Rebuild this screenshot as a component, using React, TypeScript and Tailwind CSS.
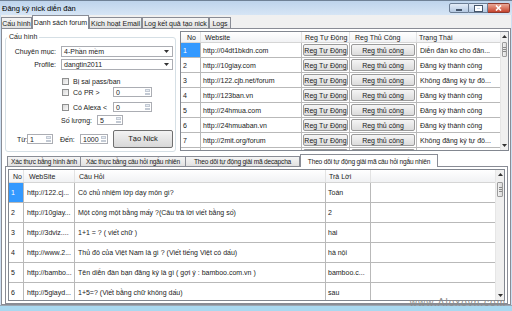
import React from 'react';

const forums = [
    ['1', 'http://04dt1bkdn.com', 'Diễn đàn ko cho đăn...'],
    ['2', 'http://10giay.com', 'Đăng ký thành công'],
    ['3', 'http://122.cjb.net/forum', 'Không đăng ký tự đô...'],
    ['4', 'http://123ban.vn', 'Đăng ký thành công'],
    ['5', 'http://24hmua.com', 'Đăng ký thành công'],
    ['6', 'http://24hmuaban.vn', 'Đăng ký thành công'],
    ['7', 'http://2mit.org/forum', 'Không đăng ký tự đô...'],
    ['8', 'http://2nd.vn', 'Đăng ký thành công'],
];

const questions = [
    ['1', 'http://122.cj...', 'Cô chủ nhiệm lớp dạy môn gì?', 'Toán'],
    ['2', 'http://10giay...', 'Một cộng một bằng mấy ?(Câu trả lời viết bằng số)', '2'],
    ['3', 'http://3dviz....', '1+1 = ? ( viết chữ )', 'hai'],
    ['4', 'http://www.2...', 'Thủ đô của Việt Nam là gì ? (Viết tiếng Việt có dấu)', 'hà nội'],
    ['5', 'http://bambo...', 'Tên diễn đàn bạn đăng ký là gì ( gợi ý : bamboo.com.vn )', 'bamboo.c...'],
    ['6', 'http://5giayd...', '1+5=? (Viết bằng chữ không dấu)', 'sau'],
];

function Arrow({ up }: { up?: boolean }) {
    return (
        <svg width="5" height="3" viewBox="0 0 5 3">
            <path d={up ? 'M0 3h5L2.5 0z' : 'M0 0h5L2.5 3z'} fill="#333" />
        </svg>
    );
}

function Spin({ value, className }: { value: string; className: string }) {
    return (
        <div className={`flex h-[10px] border border-[#abadb3] bg-white ${className}`}>
            <span className="flex-1 pl-[2px] flex items-center">{value}</span>
            <div className="w-[7px] flex flex-col gap-px p-px">
                <div className="flex-1 bg-[#e6ebf2] border border-[#c3cad4]" />
                <div className="flex-1 bg-[#e6ebf2] border border-[#c3cad4]" />
            </div>
        </div>
    );
}

function Combo({ value }: { value: string }) {
    return (
        <div className="w-[112px] h-[11px] border border-[#abadb3] bg-white flex items-center justify-between pl-[2px] pr-[3px]">
            <span>{value}</span>
            <Arrow />
        </div>
    );
}

function Check() {
    return <div className="w-[7px] h-[7px] border border-[#8e8f8f] bg-gradient-to-br from-[#d8d8d8] to-[#fafafa]" />;
}

function Tab({ label, className, active }: { label: string; className: string; active?: boolean }) {
    return active ? (
        <div className={`shrink-0 whitespace-nowrap -mb-px relative z-10 bg-white border border-b-0 border-[#898c95] flex items-center justify-center ${className}`}>
            <span className="leading-[9px]">{label}</span>
        </div>
    ) : (
        <div className={`shrink-0 whitespace-nowrap border border-b-0 border-[#898c95] bg-gradient-to-b from-[#f5f5f5] to-[#e1e1e1] flex items-center justify-center ${className}`}>
            <span className="leading-[9px]">{label}</span>
        </div>
    );
}

function ScrollBar({ w, thumbTop }: { w: string; thumbTop: string }) {
    return (
        <div className={`${w} bg-[#f0f0f0] flex flex-col border-l border-[#e6e6e6]`}>
            <div className="h-[9px] flex items-center justify-center"><Arrow up /></div>
            <div className={`${thumbTop} h-[15px] mx-px rounded-[1px] border border-[#9c9c9c] bg-gradient-to-r from-[#f3f3f3] to-[#dadada] flex flex-col items-center justify-center gap-px`}>
                <div className="w-[3px] h-px bg-[#8a8a8a]" />
                <div className="w-[3px] h-px bg-[#8a8a8a]" />
                <div className="w-[3px] h-px bg-[#8a8a8a]" />
            </div>
            <div className="flex-1" />
            <div className="h-[9px] flex items-center justify-center"><Arrow /></div>
        </div>
    );
}

function GridButton({ label }: { label: string }) {
    return (
        <div className="h-full w-full rounded-[2px] border border-[#9a9a9a] bg-gradient-to-b from-[#f5f5f5] to-[#dcdcdc] flex items-center justify-center whitespace-nowrap">
            {label}
        </div>
    );
}

export default function App() {
    return (
        <div className="w-[512px] h-[311px] overflow-hidden flex flex-col bg-[#cddff2] font-['Liberation_Sans',Arial,sans-serif] text-[7px] leading-none text-[#1a1a1a] relative">
            {/* Title bar */}
            <div className="h-[15px] flex items-start justify-between border-t border-[#6f8196] bg-gradient-to-b from-[#bed4ec] to-[#d6e5f5]">
                <span className="text-[7.5px] text-black pl-[2px] mt-[4px]">Đăng ký nick diễn đàn</span>
                <div className="flex mt-[2px] mr-[2px]">
                    <div className="w-[20px] h-[10px] rounded-l-[2px] border border-[#6c7e95] bg-gradient-to-b from-[#e4edf8] to-[#b4c9e2] flex items-center justify-center">
                        <div className="w-[6px] h-[2px] bg-white border border-[#44556b] mt-[3px]" />
                    </div>
                    <div className="w-[19px] h-[10px] border border-l-0 border-[#6c7e95] bg-gradient-to-b from-[#e4edf8] to-[#b4c9e2] flex items-center justify-center">
                        <div className="w-[7px] h-[5px] border-2 border-white outline outline-[#44556b]" />
                    </div>
                    <div className="w-[22px] h-[10px] rounded-r-[2px] border border-l-0 border-[#8b3a30] bg-gradient-to-b from-[#e9a898] to-[#c5412c] flex items-center justify-center">
                        <svg width="7" height="6" viewBox="0 0 7 6">
                            <path d="M1 0.5L6 5.5M6 0.5L1 5.5" stroke="#fff" strokeWidth="1.6" />
                        </svg>
                    </div>
                </div>
            </div>

            {/* Client area */}
            <div className="flex-1 mx-px bg-[#f0f0f0] flex flex-col">
                <div className="h-[13px] flex items-end">
                    <Tab label="Cấu hình" className="w-[31px] h-[11px]" />
                    <Tab label="Danh sách forum" className="w-[57px] h-[14px]" active />
                    <Tab label="Kích hoạt Email" className="w-[53px] h-[11px]" />
                    <Tab label="Log kết quả tạo nick" className="w-[67px] h-[11px]" />
                    <Tab label="Logs" className="w-[22px] h-[11px]" />
                </div>

                <div className="h-[277px] bg-white border border-[#898c95] flex flex-col">
                    {/* Top section */}
                    <div className="h-[123px] flex items-start">
                        <fieldset className="ml-[3px] mt-[4px] w-[171px] h-[119px] border border-[#d5dfe5] rounded-[3px] min-w-0 p-0 m-0">
                            <legend className="ml-px px-[2px] leading-[8px]">Cấu hình</legend>
                            <div className="flex flex-col">
                                <div className="mt-[5px] h-[11px] flex items-center">
                                    <span className="w-[50px] text-right">Chuyên mục:</span>
                                    <div className="ml-[5px]"><Combo value="4-Phần mềm" /></div>
                                </div>
                                <div className="mt-[2px] h-[11px] flex items-center">
                                    <span className="w-[50px] text-right">Profile:</span>
                                    <div className="ml-[5px]"><Combo value="dangtin2011" /></div>
                                </div>
                                <div className="mt-[7px] h-[8px] flex items-center ml-[56px]">
                                    <Check />
                                    <span className="ml-[4px]">Bị sai pass/ban</span>
                                </div>
                                <div className="mt-[2px] h-[10px] flex items-center ml-[56px]">
                                    <div className="w-[51px] flex items-center">
                                        <Check />
                                        <span className="ml-[4px]">Có PR &gt;</span>
                                    </div>
                                    <Spin value="0" className="w-[39px]" />
                                </div>
                                <div className="mt-[5px] h-[10px] flex items-center ml-[56px]">
                                    <div className="w-[51px] flex items-center">
                                        <Check />
                                        <span className="ml-[4px]">Có Alexa &lt;</span>
                                    </div>
                                    <Spin value="0" className="w-[39px]" />
                                </div>
                                <div className="mt-[3px] h-[10px] flex items-center ml-[55px]">
                                    <span className="w-[36px]">Số lượng:</span>
                                    <Spin value="5" className="w-[26px]" />
                                </div>
                                <div className="mt-[5px] h-[18px] flex items-center ml-[11px]">
                                    <span className="w-[10px]">Từ:</span>
                                    <Spin value="1" className="w-[26px]" />
                                    <span className="ml-[7px] w-[20px]">Đến:</span>
                                    <Spin value="1000" className="w-[28px]" />
                                    <div className="ml-[5px] w-[60px] h-[18px] rounded-[2px] border border-[#707070] bg-gradient-to-b from-[#f3f3f3] to-[#d8d8d8] flex items-center justify-center text-[7.5px]">
                                        Tạo Nick
                                    </div>
                                </div>
                            </div>
                        </fieldset>

                        {/* Forum grid */}
                        <div className="ml-[4px] mt-[2px] w-[329px] h-[120px] border border-[#828790] bg-white flex overflow-hidden">
                            <div className="flex-1 flex flex-col">
                                <div className="h-[11px] shrink-0 flex border-b border-[#d5d5d5] bg-gradient-to-b from-white to-[#f1f2f4]">
                                    <span className="w-[20px] pl-[6px] flex items-center border-r border-[#e3e3e3]">No</span>
                                    <span className="w-[101px] pl-[4px] flex items-center border-r border-[#e3e3e3]">Website</span>
                                    <span className="w-[48px] pl-[3px] flex items-center border-r border-[#e3e3e3] whitespace-nowrap">Reg Tự Động</span>
                                    <span className="w-[67px] pl-[5px] flex items-center border-r border-[#e3e3e3]">Reg Thủ Công</span>
                                    <span className="flex-1 pl-[2px] flex items-center">Trạng Thái</span>
                                </div>
                                {forums.map((f, i) => (
                                    <div key={f[0]} className="h-[15px] shrink-0 flex border-b border-[#b9b9b9]">
                                        <span className={`w-[20px] pl-[2px] flex items-center border-r border-[#b9b9b9] ${i === 0 ? 'bg-[#3399ff] text-white' : ''}`}>{f[0]}</span>
                                        <span className="w-[101px] pl-[2px] flex items-center border-r border-[#b9b9b9]">{f[1]}</span>
                                        <span className="w-[48px] p-px border-r border-[#b9b9b9]"><GridButton label="Reg Tự Động" /></span>
                                        <span className="w-[67px] p-px border-r border-[#b9b9b9]"><GridButton label="Reg thủ công" /></span>
                                        <span className="flex-1 pl-[3px] flex items-center whitespace-nowrap overflow-hidden">{f[2]}</span>
                                    </div>
                                ))}
                            </div>
                            <ScrollBar w="w-[8px]" thumbTop="mt-[1px]" />
                        </div>
                    </div>

                    {/* Bottom tab control */}
                    <div className="mt-[2px] h-[12px] flex items-end pl-[5px] text-[6.6px] tracking-[-0.2px]">
                        <Tab label="Xác thực bằng hình ảnh" className="w-[74px] h-[10px]" />
                        <Tab label="Xác thực bằng câu hỏi ngẫu nhiên" className="w-[105px] h-[10px] border-l-0" />
                        <Tab label="Theo dõi tự động giải mã decapcha" className="w-[114px] h-[10px] border-l-0" />
                        <Tab label="Theo dõi tự động giải mã câu hỏi ngẫu nhiên" className="w-[138px] h-[13px]" active />
                    </div>
                    <div className="ml-[3px] w-[503px] h-[138px] border border-[#898c95] bg-white p-[2px]">
                        <div className="h-full border border-[#828790] bg-white flex overflow-hidden">
                            <div className="flex-1 flex flex-col">
                                <div className="h-[13px] shrink-0 flex border-b border-[#d5d5d5] bg-gradient-to-b from-white to-[#f1f2f4]">
                                    <span className="w-[15px] pl-[4px] flex items-center border-r border-[#e3e3e3]">No</span>
                                    <span className="w-[51px] pl-[5px] flex items-center border-r border-[#e3e3e3]">WebSite</span>
                                    <span className="w-[251px] pl-[4px] flex items-center border-r border-[#e3e3e3]">Câu Hỏi</span>
                                    <span className="w-[45px] pl-[3px] flex items-center border-r border-[#e3e3e3]">Trả Lời</span>
                                    <span className="flex-1" />
                                </div>
                                {questions.map((q, i) => (
                                    <div key={q[0]} className="h-[20px] shrink-0 flex border-b border-[#b9b9b9]">
                                        <span className={`w-[15px] pl-[2px] flex items-center border-r border-[#b9b9b9] ${i === 0 ? 'bg-[#3399ff] text-white' : ''}`}>{q[0]}</span>
                                        <span className="w-[51px] pl-[3px] flex items-center border-r border-[#b9b9b9] whitespace-nowrap overflow-hidden">{q[1]}</span>
                                        <span className="w-[251px] pl-[3px] flex items-center border-r border-[#b9b9b9] whitespace-nowrap overflow-hidden">{q[2]}</span>
                                        <span className="w-[45px] pl-[2px] flex items-center border-r border-[#b9b9b9] whitespace-nowrap overflow-hidden">{q[3]}</span>
                                        <span className="flex-1" />
                                    </div>
                                ))}
                            </div>
                            <ScrollBar w="w-[9px]" thumbTop="mt-[3px]" />
                        </div>
                    </div>
                </div>
            </div>

            <div className="h-[6px] border-t border-[#9aa6b2] bg-[#a9d8f0]" />

            {/* watermark */}
            <span className="absolute right-[6px] bottom-[3px] text-[10px] tracking-[1px] text-[#8c8c8c]">www.Aloxovn.com</span>
        </div>
    );
}
